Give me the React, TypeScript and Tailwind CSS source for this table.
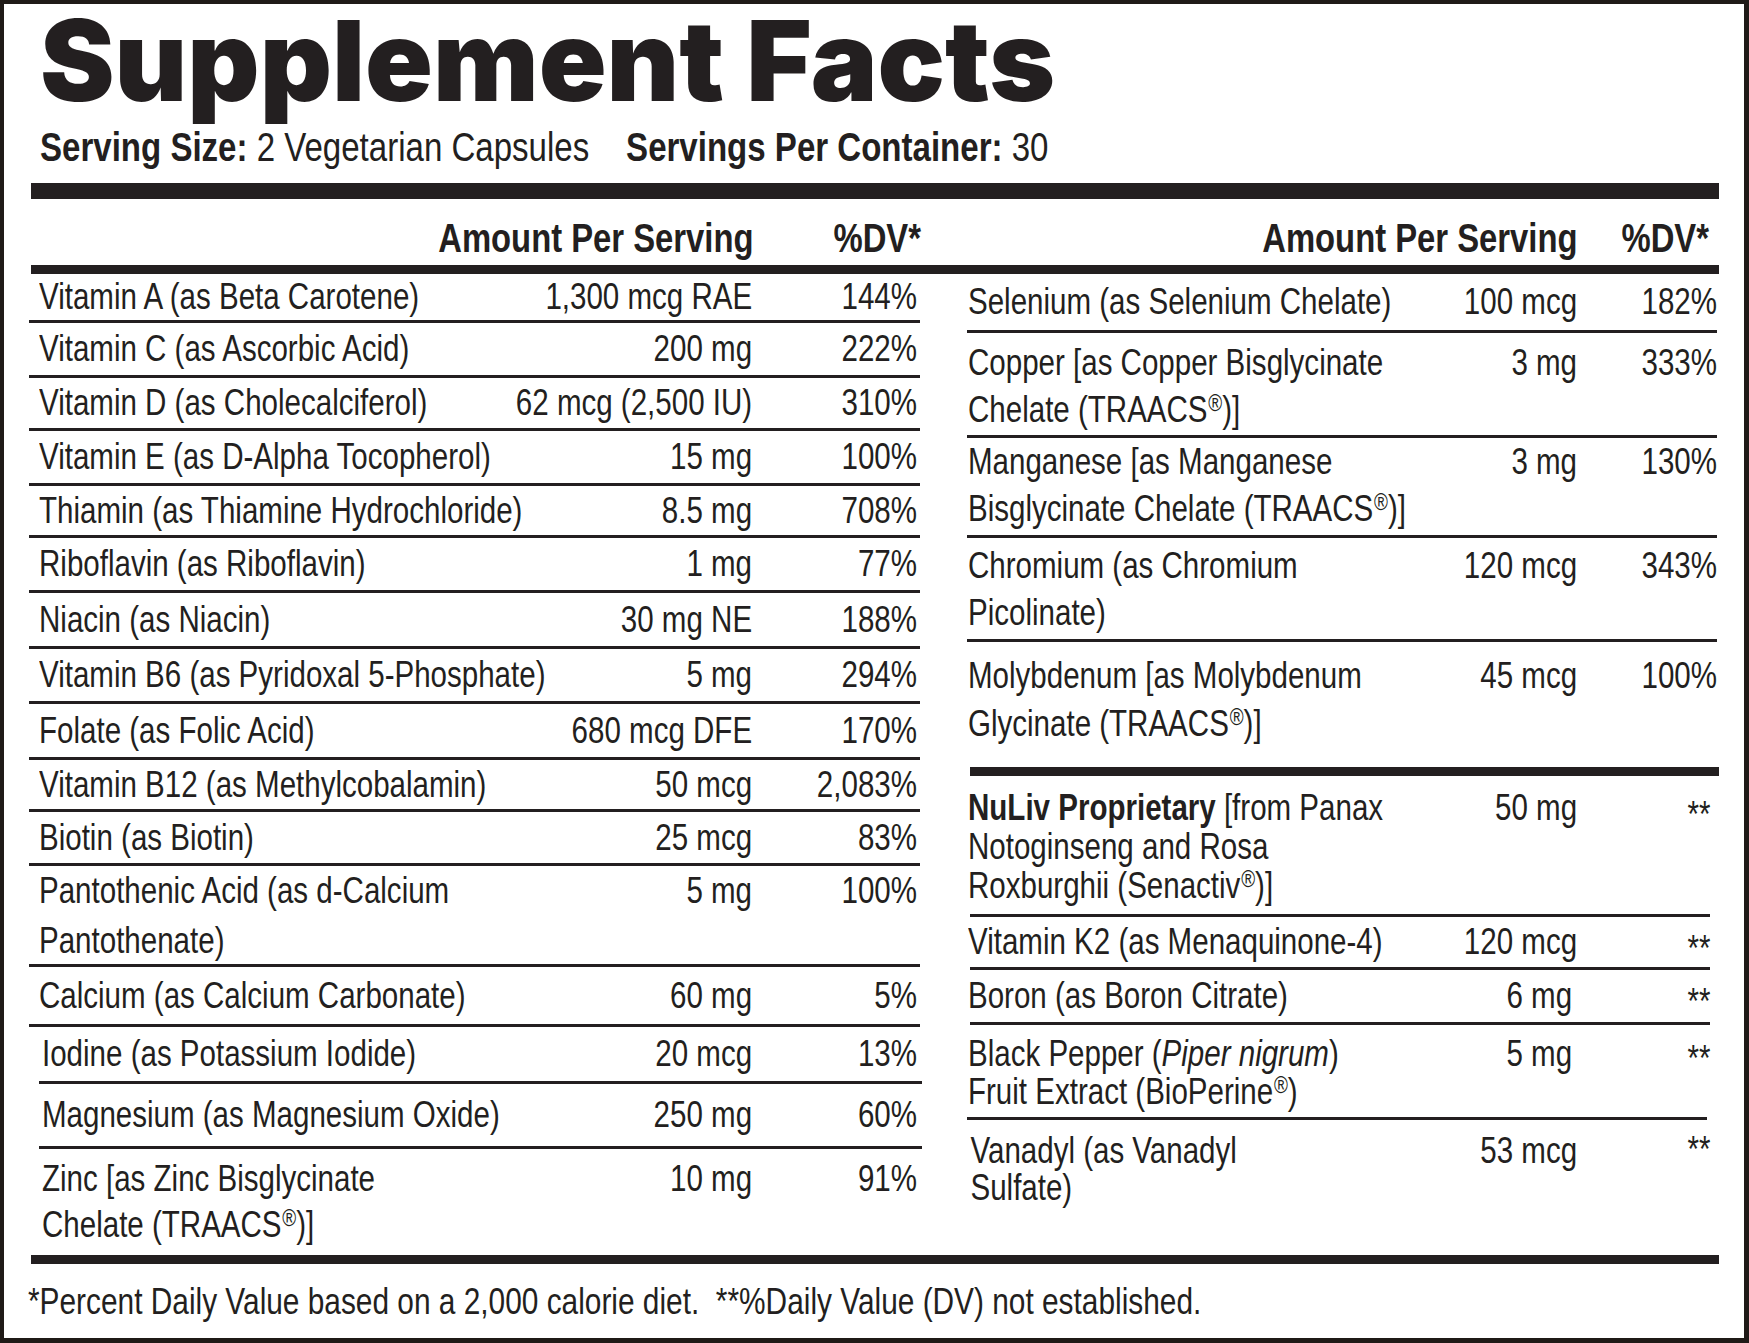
import type { ReactNode } from "react";

type TRow = {
  name: ReactNode;
  amount: string;
  dv: string;
  h: number;
  lines?: number;
  indent?: boolean;
};

type TRightRow = {
  name: ReactNode;
  amount: string;
  dv: string;
  h: number;
  multi?: boolean;
  star?: boolean;
};

// no narrow face installed, so the label text is squeezed horizontally
const narrowLeft = "origin-left scale-x-[0.82]";
const narrowRight = "origin-right scale-x-[0.82]";

const R = () => <sup className="text-[23px] ml-[1px]">®</sup>;

// left column rows, heights measured from line to line
const leftRows: TRow[] = [
  { name: "Vitamin A (as Beta Carotene)", amount: "1,300 mcg RAE", dv: "144%", h: 46 },
  { name: "Vitamin C (as Ascorbic Acid)", amount: "200 mg", dv: "222%", h: 52 },
  { name: "Vitamin D (as Cholecalciferol)", amount: "62 mcg (2,500 IU)", dv: "310%", h: 50 },
  { name: "Vitamin E (as D-Alpha Tocopherol)", amount: "15 mg", dv: "100%", h: 52 },
  { name: "Thiamin (as Thiamine Hydrochloride)", amount: "8.5 mg", dv: "708%", h: 49 },
  { name: "Riboflavin (as Riboflavin)", amount: "1 mg", dv: "77%", h: 52 },
  { name: "Niacin (as Niacin)", amount: "30 mg NE", dv: "188%", h: 53 },
  { name: "Vitamin B6 (as Pyridoxal 5-Phosphate)", amount: "5 mg", dv: "294%", h: 52 },
  { name: "Folate (as Folic Acid)", amount: "680 mcg DFE", dv: "170%", h: 53 },
  { name: "Vitamin B12 (as Methylcobalamin)", amount: "50 mcg", dv: "2,083%", h: 49 },
  { name: "Biotin (as Biotin)", amount: "25 mcg", dv: "83%", h: 51 },
  {
    name: (
      <>
        Pantothenic Acid (as d-Calcium
        <br />
        Pantothenate)
      </>
    ),
    amount: "5 mg",
    dv: "100%",
    h: 98,
    lines: 2,
  },
  { name: "Calcium (as Calcium Carbonate)", amount: "60 mg", dv: "5%", h: 57 },
  { name: "Iodine (as Potassium Iodide)", amount: "20 mcg", dv: "13%", h: 54, indent: true },
  { name: "Magnesium (as Magnesium Oxide)", amount: "250 mg", dv: "60%", h: 62, indent: true },
  {
    name: (
      <>
        Zinc [as Zinc Bisglycinate
        <br />
        Chelate (TRAACS
        <R />
        )]
      </>
    ),
    amount: "10 mg",
    dv: "91%",
    h: 106,
    lines: 2,
    indent: true,
  },
];

function LeftRow({ row }: { row: TRow }) {
  const multi = row.lines === 2;
  return (
    <div
      className={`flex pr-[5px] ${row.indent ? "pl-[13px]" : "pl-[10px]"} ${
        multi ? "items-start" : "items-center leading-[40px]"
      } ${multi && row.indent ? "pt-[7px] leading-[46px]" : ""} ${
        multi && !row.indent ? "leading-[50px]" : ""
      }`}
      style={{ height: row.h }}
    >
      <div className={`flex-1 min-w-0 whitespace-nowrap ${narrowLeft}`}>{row.name}</div>
      <div className={`shrink-0 whitespace-nowrap text-right ${narrowRight}`}>{row.amount}</div>
      <div className={`w-[165px] shrink-0 text-right ${narrowRight}`}>{row.dv}</div>
    </div>
  );
}

function RightRow({
  row,
  pt,
  leading,
  amountPr = 0,
  starTop = 9,
}: {
  row: TRightRow;
  pt?: number;
  leading?: number;
  amountPr?: number;
  starTop?: number;
}) {
  return (
    <div
      className={`flex pl-[1px] pr-[1px] ${row.multi ? "items-start" : "items-center leading-[40px]"}`}
      style={{ height: row.h, paddingTop: pt, lineHeight: leading ? `${leading}px` : undefined }}
    >
      <div className={`flex-1 min-w-0 whitespace-nowrap ${narrowLeft}`}>{row.name}</div>
      <div
        className={`shrink-0 whitespace-nowrap text-right ${narrowRight}`}
        style={{ paddingRight: amountPr }}
      >
        {row.amount}
      </div>
      <div className={`w-[140px] shrink-0 text-right ${narrowRight}`}>
        {row.star ? (
          <span className="relative pr-[8px]" style={{ top: starTop }}>
            **
          </span>
        ) : (
          row.dv
        )}
      </div>
    </div>
  );
}

function Line({ className = "" }: { className?: string }) {
  return <div className={`h-[3px] bg-[#231f20] ${className}`} />;
}

function HeaderCols({ dvW, pr }: { dvW: string; pr: string }) {
  return (
    <div className={`flex justify-end font-bold ${pr}`}>
      <div className={`whitespace-nowrap ${narrowRight}`}>Amount Per Serving</div>
      <div className={`${dvW} shrink-0 text-right ${narrowRight}`}>%DV*</div>
    </div>
  );
}

export default function App() {
  return (
    <div className="w-[1749px] h-[1343px] bg-white border-t-[4px] border-l-[4px] border-r-[5px] border-b-[5px] border-[#1f1a17] text-[#231f20]">
      <div className="pl-[25px] pr-[26px] font-['Liberation_Sans',Arial,sans-serif]">
        <h1 className="mt-[-12px] ml-[11px] text-[112px] leading-[136px] font-black font-['Inter',sans-serif] whitespace-nowrap">
          Supplement Facts
        </h1>
        <div className={`ml-[11px] text-[40.3px] leading-[40px] whitespace-nowrap ${narrowLeft}`}>
          <span className="font-bold">Serving Size:</span> 2 Vegetarian Capsules
          <span className="ml-[45px] font-bold">Servings Per Container:</span> 30
        </div>

        <div className="mt-[15px] ml-[2px] mr-[-1px] h-[16px] bg-[#231f20]" />

        <div className="flex pt-[19px] pb-[7px] text-[40px] leading-[40px]">
          <div className="w-[893px]">
            <HeaderCols dvW="w-[167px]" pr="pr-[1px]" />
          </div>
          <div className="w-[751px] ml-[45px]">
            <HeaderCols dvW="w-[131px]" pr="pr-[9px]" />
          </div>
        </div>

        <div className="ml-[2px] mr-[-1px] h-[9px] bg-[#231f20]" />

        <div className="flex items-start text-[36px]">
          <div className="w-[893px]">
            {leftRows.map((row, i) => (
              <div key={i}>
                <LeftRow row={row} />
                {i < leftRows.length - 1 && (
                  <Line className={i >= 13 ? "ml-[10px]" : "mr-[2px]"} />
                )}
              </div>
            ))}
          </div>

          <div className="w-[751px] ml-[45px]">
            <RightRow
              row={{ name: "Selenium (as Selenium Chelate)", amount: "100 mcg", dv: "182%", h: 56 }}
            />
            <Line className="mr-[1px]" />
            <RightRow
              row={{
                name: (
                  <>
                    Copper [as Copper Bisglycinate
                    <br />
                    Chelate (TRAACS
                    <R />
                    )]
                  </>
                ),
                amount: "3 mg",
                dv: "333%",
                h: 102,
                multi: true,
              }}
              pt={6}
              leading={47}
            />
            <Line className="mr-[1px]" />
            <RightRow
              row={{
                name: (
                  <>
                    Manganese [as Manganese
                    <br />
                    Bisglycinate Chelate (TRAACS
                    <R />
                    )]
                  </>
                ),
                amount: "3 mg",
                dv: "130%",
                h: 97,
                multi: true,
              }}
              pt={0}
              leading={47}
            />
            <Line className="mr-[1px]" />
            <RightRow
              row={{
                name: (
                  <>
                    Chromium (as Chromium
                    <br />
                    Picolinate)
                  </>
                ),
                amount: "120 mcg",
                dv: "343%",
                h: 101,
                multi: true,
              }}
              pt={4}
              leading={47}
            />
            <Line className="mr-[1px]" />
            <RightRow
              row={{
                name: (
                  <>
                    Molybdenum [as Molybdenum
                    <br />
                    Glycinate (TRAACS
                    <R />
                    )]
                  </>
                ),
                amount: "45 mcg",
                dv: "100%",
                h: 125,
                multi: true,
              }}
              pt={10}
              leading={48}
            />
            <div className="ml-[3px] mr-[-1px] h-[9px] bg-[#231f20]" />
            <RightRow
              row={{
                name: (
                  <>
                    <span className="font-bold">NuLiv Proprietary</span> [from Panax
                    <br />
                    Notoginseng and Rosa
                    <br />
                    Roxburghii (Senactiv
                    <R />
                    )]
                  </>
                ),
                amount: "50 mg",
                dv: "",
                h: 138,
                multi: true,
                star: true,
              }}
              pt={12}
              leading={39}
              starTop={7}
            />
            <Line className="ml-[3px] mr-[8px]" />
            <RightRow
              row={{ name: "Vitamin K2 (as Menaquinone-4)", amount: "120 mcg", dv: "", h: 50, star: true }}
              starTop={7}
            />
            <Line className="ml-[3px] mr-[8px]" />
            <RightRow
              row={{ name: "Boron (as Boron Citrate)", amount: "6 mg", dv: "", h: 52, star: true }}
              amountPr={6}
              starTop={6}
            />
            <Line className="ml-[3px] mr-[8px]" />
            <RightRow
              row={{
                name: (
                  <>
                    Black Pepper (<i>Piper nigrum</i>)
                    <br />
                    Fruit Extract (BioPerine
                    <R />)
                  </>
                ),
                amount: "5 mg",
                dv: "",
                h: 92,
                multi: true,
                star: true,
              }}
              pt={10}
              leading={38}
              amountPr={6}
              starTop={5}
            />
            <Line className="mr-[11px]" />
            <RightRow
              row={{
                name: (
                  <>
                    <span className="ml-[3px]">Vanadyl (as Vanadyl</span>
                    <br />
                    <span className="ml-[3px]">Sulfate)</span>
                  </>
                ),
                amount: "53 mcg",
                dv: "",
                h: 135,
                multi: true,
                star: true,
              }}
              pt={12}
              leading={37}
              starTop={-1}
            />
          </div>
        </div>

        <div className="ml-[2px] mr-[-1px] h-[9px] bg-[#231f20]" />

        <div className={`mt-[18px] ml-[-1px] text-[36.4px] leading-[40px] whitespace-nowrap ${narrowLeft}`}>
          *Percent Daily Value based on a 2,000 calorie diet.&nbsp; **%Daily Value (DV) not established.
        </div>
      </div>
    </div>
  );
}
